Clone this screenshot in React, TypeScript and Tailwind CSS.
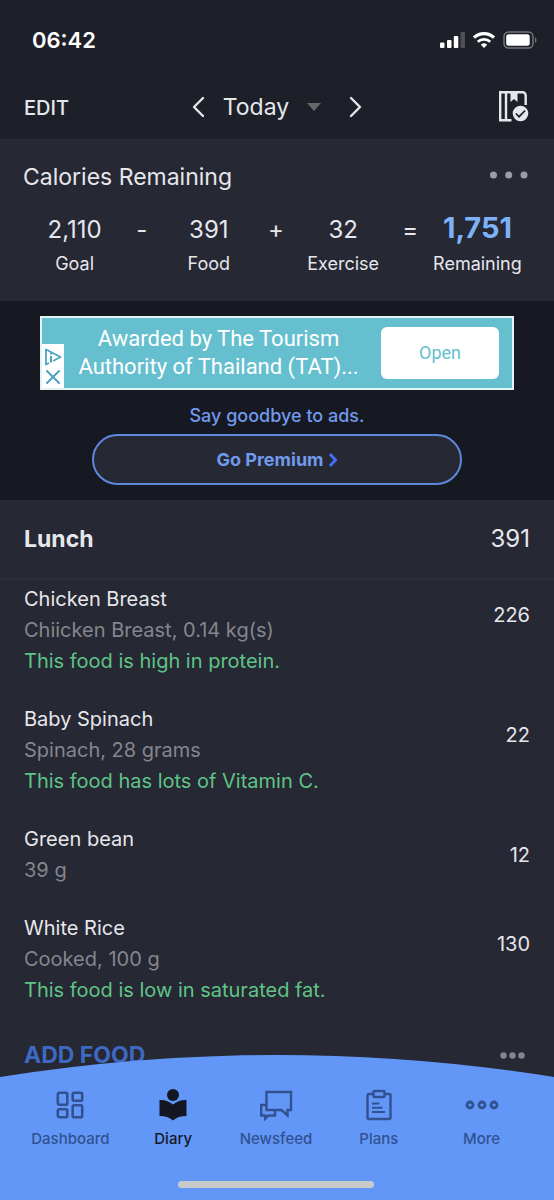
import type { ReactNode } from "react";

interface Food {
  name: string;
  detail: string;
  calories: number;
  note?: string;
}

const foods: Food[] = [
  {
    name: "Chicken Breast",
    detail: "Chiicken Breast, 0.14 kg(s)",
    calories: 226,
    note: "This food is high in protein.",
  },
  {
    name: "Baby Spinach",
    detail: "Spinach, 28 grams",
    calories: 22,
    note: "This food has lots of Vitamin C.",
  },
  { name: "Green bean", detail: "39 g", calories: 12 },
  {
    name: "White Rice",
    detail: "Cooked, 100 g",
    calories: 130,
    note: "This food is low in saturated fat.",
  },
];

function StatusBar() {
  return (
    <div className="flex h-20 items-center justify-between pr-[17px] pl-8">
      <span className="text-[22px] font-semibold text-white">06:42</span>
      <div className="flex items-center gap-2">
        <svg width="25" height="16" viewBox="0 0 25 16" fill="#fff">
          <rect x="0" y="10.500" width="4.500" height="5.500" rx="1" />
          <rect x="7" y="8" width="4.500" height="8" rx="1" />
          <rect x="13.800" y="4" width="4.500" height="12" rx="1" />
          <rect x="20.500" y="0" width="4.500" height="16" rx="1" opacity="0.22" />
        </svg>
        <svg width="22" height="16" viewBox="0 0 22 16" fill="none" stroke="#fff">
          <path d="M1 5.600a14.500 14.500 0 0 1 20 0" strokeWidth="3.200" />
          <path d="M4.800 9.800a9 9 0 0 1 12.400 0" strokeWidth="2.800" />
          <path d="M11 16l-3.200-3.300a4.800 4.800 0 0 1 6.400 0z" fill="#fff" stroke="none" />
        </svg>
        <svg width="34" height="18" viewBox="0 0 34 18" fill="none">
          <rect x="1" y="1" width="29" height="16" rx="4.500" stroke="#72747b" strokeWidth="1.500" />
          <rect x="3.200" y="3.200" width="23.500" height="11.600" rx="2.500" fill="#fff" />
          <path d="M32 6.200c2 1 2 4.600 0 5.600z" fill="#72747b" />
        </svg>
      </div>
    </div>
  );
}

function Header() {
  return (
    <header className="bg-[#1e2029]">
      <StatusBar />
      <div className="grid h-[59px] grid-cols-[1fr_auto_1fr] items-start px-6">
        <button className="h-14 justify-self-start text-xl font-medium">EDIT</button>
        <div className="flex h-[54px] items-center">
          <button aria-label="Previous day">
            <svg width="14" height="22" viewBox="0 0 14 22" fill="none" stroke="currentColor" strokeWidth="2.400" strokeLinecap="round" strokeLinejoin="round">
              <path d="M12 2L3 11l9 9" />
            </svg>
          </button>
          <button className="mr-7 ml-[18px] flex items-center gap-[18px] text-[23px]">
            Today
            <svg width="14" height="8" viewBox="0 0 14 8" fill="#68686b">
              <path d="M0 0h14L7 8z" />
            </svg>
          </button>
          <button aria-label="Next day">
            <svg width="14" height="22" viewBox="0 0 14 22" fill="none" stroke="currentColor" strokeWidth="2.400" strokeLinecap="round" strokeLinejoin="round">
              <path d="M2 2l9 9-9 9" />
            </svg>
          </button>
        </div>
        <button aria-label="Complete diary" className="mt-[10px] justify-self-end">
          <svg width="31" height="32" viewBox="0 0 31 32" fill="none">
            <path d="M.500 2.200H23.500a3.200 3.200 0 0 1 3.200 3.200V15" stroke="#e6e7ec" strokeWidth="2.400" />
            <path d="M1.200 1v29.300H12.500M7 1v29" stroke="#e6e7ec" strokeWidth="2.400" />
            <path d="M11.500 1.500h7V12l-3.500-3-3.500 3z" fill="#e6e7ec" />
            <circle cx="21.500" cy="23.500" r="7.800" fill="#e6e7ec" />
            <path d="M16.800 23.500l3.300 3.200 6-6.200" stroke="#1e2029" strokeWidth="1.700" />
          </svg>
        </button>
      </div>
    </header>
  );
}

function Amount({ value, label }: { value: string; label: string }) {
  return (
    <div className="flex flex-col items-center">
      <span className="text-2xl leading-10">{value}</span>
      <span className="text-lg leading-7">{label}</span>
    </div>
  );
}

function Operator({ sign }: { sign: string }) {
  return <span className="text-center text-2xl leading-10">{sign}</span>;
}

function Summary() {
  return (
    <section className="h-[162px] border-t border-[#2a2c36] bg-[#262833] pt-[17px]">
      <div className="flex items-center justify-between pr-[26px] pl-[23px]">
        <h1 className="text-[23px] leading-10">Calories Remaining</h1>
        <button aria-label="Summary options" className="pb-1">
          <svg width="38" height="8" viewBox="0 0 38 8" fill="#9c9da3">
            <circle cx="3.500" cy="4" r="3.500" />
            <circle cx="18.700" cy="4" r="3.500" />
            <circle cx="34" cy="4" r="3.500" />
          </svg>
        </button>
      </div>
      <div className="mt-[13px] grid grid-cols-7 pr-[43px] pl-[41px]">
        <Amount value="2,110" label="Goal" />
        <Operator sign="-" />
        <Amount value="391" label="Food" />
        <Operator sign="+" />
        <Amount value="32" label="Exercise" />
        <Operator sign="=" />
        <div className="flex flex-col items-center">
          <span className="pb-1 text-[29px] leading-9 font-bold text-[#7eb2f8]">1,751</span>
          <span className="text-lg leading-7">Remaining</span>
        </div>
      </div>
    </section>
  );
}

function Promo() {
  return (
    <section className="flex flex-col items-center bg-[#161822] px-10 pt-[15px] pb-[15px] text-[#7199ec]">
      <div className="flex w-full items-center border-2 border-[#e4f3f5] bg-[#66bfce] font-['Roboto',sans-serif]">
        <div className="flex w-[22px] flex-col items-center gap-1 self-end bg-white py-1">
          <svg width="18" height="18" viewBox="0 0 18 18" fill="none" stroke="#4ba3c3" strokeWidth="1.800" strokeLinejoin="round">
            <path d="M5 15l-3 1.500v-15L16.500 9 9 13" />
            <path d="M7 8v6.500M7 4.800v1.800" strokeWidth="2" />
          </svg>
          <svg width="14" height="14" viewBox="0 0 14 14" fill="none" stroke="#4ba3c3" strokeWidth="2" strokeLinecap="round">
            <path d="M1 1l12 12M13 1L1 13" />
          </svg>
        </div>
        <p className="flex-1 py-[7px] text-center text-[22px] leading-7 text-white">
          Awarded by The Tourism
          <br />
          Authority of Thailand (TAT)...
        </p>
        <a
          href="#open"
          className="mr-[13px] ml-2 flex h-[52px] w-[118px] items-center justify-center rounded-md bg-white text-lg text-[#66bfce]"
        >
          Open
        </a>
      </div>
      <p className="mt-3 text-lg leading-7 font-medium">Say goodbye to ads.</p>
      <button className="mt-1 flex h-[51px] w-[78%] items-center justify-center gap-1 rounded-full border-2 border-[#5e88dc] bg-[#262833] text-lg font-bold">
        Go Premium
        <svg width="10" height="14" viewBox="0 0 10 14" fill="none" stroke="#3f6ff0" strokeWidth="3">
          <path d="M2 1l5.500 6L2 13" />
        </svg>
      </button>
    </section>
  );
}

function FoodRow({ food }: { food: Food }) {
  return (
    <li className="flex items-start justify-between text-xl leading-[31px]">
      <div>
        <p>{food.name}</p>
        <p className="text-[#85868d]">{food.detail}</p>
        {food.note && <p className="text-[#5fc487]">{food.note}</p>}
      </div>
      <span className="leading-[62px]">{food.calories}</span>
    </li>
  );
}

function Meal() {
  return (
    <section>
      <div className="flex h-20 items-center justify-between border-b-2 border-[#2d2f39] px-6 text-2xl">
        <h2 className="text-[23px] font-bold">Lunch</h2>
        <span>391</span>
      </div>
      <ul className="flex flex-col gap-[27px] px-6 pt-1">
        {foods.map((food) => (
          <FoodRow key={food.name} food={food} />
        ))}
      </ul>
      <div className="mt-[31px] flex h-9 items-center justify-between pr-[29px] pl-6">
        <button className="text-[23px] font-bold text-[#3e69c2]">ADD FOOD</button>
        <button aria-label="Lunch options">
          <svg width="25" height="7" viewBox="0 0 25 7" fill="#85868f">
            <circle cx="3.500" cy="3.500" r="3.200" />
            <circle cx="12.500" cy="3.500" r="3.200" />
            <circle cx="21.500" cy="3.500" r="3.200" />
          </svg>
        </button>
      </div>
    </section>
  );
}

const tabs: { label: string; icon: ReactNode }[] = [
  {
    label: "Dashboard",
    icon: (
      <g fill="none" stroke="currentColor" strokeWidth="2.600">
        <rect x="3.800" y="3.800" width="9.500" height="12" rx="1.500" />
        <rect x="18.700" y="3.800" width="9.500" height="8" rx="1.500" />
        <rect x="3.800" y="20.200" width="9.500" height="8" rx="1.500" />
        <rect x="18.700" y="16.200" width="9.500" height="12" rx="1.500" />
      </g>
    ),
  },
  {
    label: "Diary",
    icon: (
      <g fill="currentColor">
        <circle cx="16" cy="6" r="6" />
        <path d="M2.500 11C8 10.800 12.500 12.500 16 15.600 19.500 12.500 24 10.800 29.500 11v16c-5.500 0-10 1.400-13.500 4.600C12.500 28.400 8 27 2.500 27z" />
      </g>
    ),
  },
  {
    label: "Newsfeed",
    icon: (
      <g fill="none" stroke="currentColor" strokeWidth="2.400">
        <path d="M6.500 3H31v18h-3.500v5.500L21.500 21h-15z" />
        <path d="M6.500 16H1.200v10.500h4v3.200l3.300-3.200h6.500V21" />
      </g>
    ),
  },
  {
    label: "Plans",
    icon: (
      <g fill="none" stroke="currentColor" strokeWidth="2.400">
        <path d="M10 5H6a1.500 1.500 0 0 0-1.500 1.500v22A1.500 1.500 0 0 0 6 30h20a1.500 1.500 0 0 0 1.500-1.500v-22A1.500 1.500 0 0 0 26 5h-4" />
        <rect x="10.500" y="2" width="11" height="6" rx="1" />
        <path d="M9 14.500h7.500M9 18.800h10.500M9 23h13" strokeWidth="2" />
      </g>
    ),
  },
  {
    label: "More",
    icon: (
      <g fill="none" stroke="currentColor" strokeWidth="2.800">
        <circle cx="4" cy="16" r="3" />
        <circle cx="16" cy="16" r="3" />
        <circle cx="28" cy="16" r="3" />
      </g>
    ),
  },
];

function TabBar({ active }: { active: string }) {
  return (
    <nav className="fixed inset-x-0 bottom-0">
      <svg className="block h-[22px] w-full" viewBox="0 0 554 22" preserveAspectRatio="none" fill="#6297f8">
        <path d="M0 22Q277 -22 554 22z" />
      </svg>
      <div className="bg-[#6297f8] pt-3 pr-[21px] pb-3 pl-[19px]">
        <div className="grid grid-cols-5">
          {tabs.map((tab) => (
            <a
              key={tab.label}
              href={`#${tab.label.toLowerCase()}`}
              aria-current={tab.label === active ? "page" : undefined}
              className={
                tab.label === active
                  ? "flex flex-col items-center gap-[6px] text-[#141722]"
                  : "flex flex-col items-center gap-[6px] text-[#315190]"
              }
            >
              <svg width="32" height="32" viewBox="0 0 32 32" overflow="visible">
                {tab.icon}
              </svg>
              <span className="text-[15px] leading-6 font-medium">{tab.label}</span>
            </a>
          ))}
        </div>
        <div className="mx-auto mt-[30px] h-[7px] w-[38%] rounded-full bg-[#c9cacc]" />
      </div>
    </nav>
  );
}

export default function App() {
  return (
    <div className="min-h-screen bg-[#262833] pb-[120px] font-['Inter',sans-serif] text-[#e6e7ec]">
      <Header />
      <main>
        <Summary />
        <Promo />
        <Meal />
      </main>
      <TabBar active="Diary" />
    </div>
  );
}
